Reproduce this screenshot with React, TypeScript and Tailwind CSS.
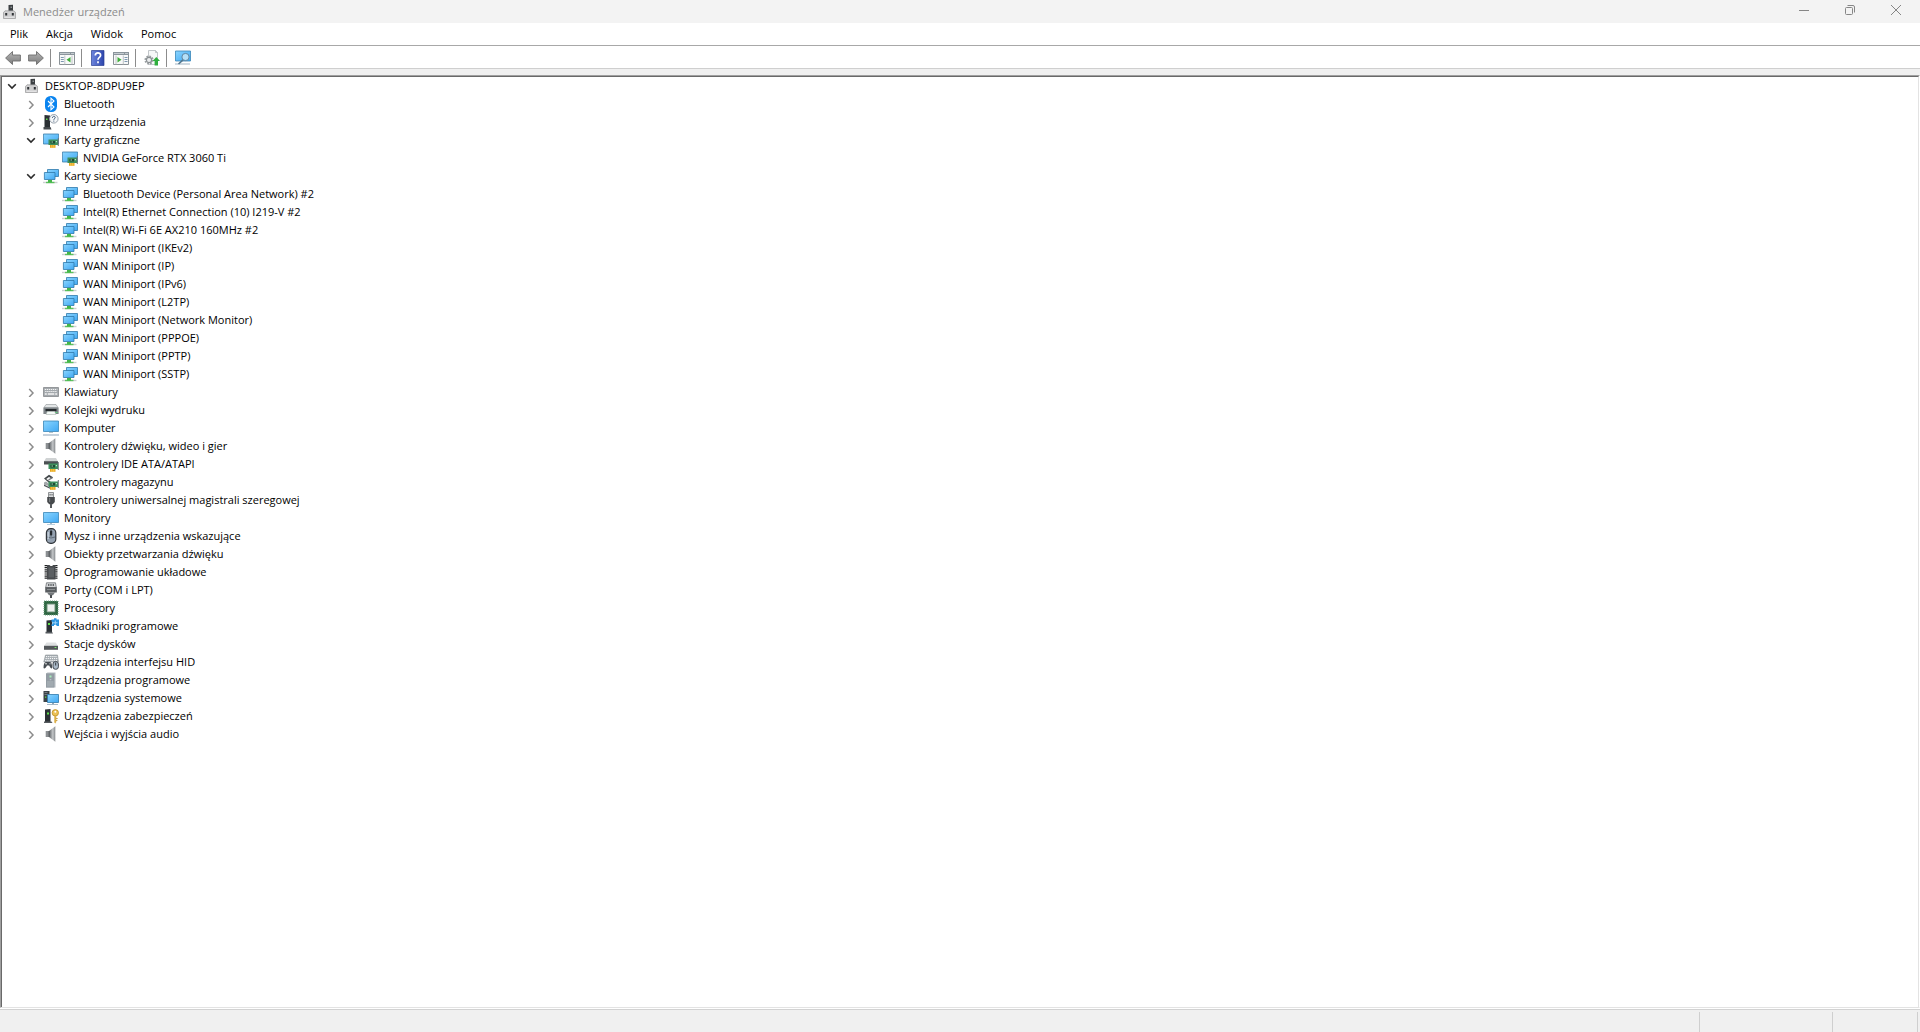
import { useState, type ReactNode } from 'react'

type IconProps = { children: ReactNode }

function Icon({ children }: IconProps) {
  return (
    <svg viewBox="0 0 16 16" className="h-4 w-4 shrink-0" aria-hidden="true">
      {children}
    </svg>
  )
}

const Gradients = () => (
  <svg className="absolute h-0 w-0" aria-hidden="true">
    <defs>
      <linearGradient id="screen" x1="0" y1="0" x2="1" y2="1">
        <stop offset="0" stopColor="#8ad5ff" />
        <stop offset="1" stopColor="#40a8f3" />
      </linearGradient>
      <linearGradient id="metal" x1="0" y1="0" x2="1" y2="0">
        <stop offset="0" stopColor="#5c6064" />
        <stop offset="0.6" stopColor="#c3c6c8" />
        <stop offset="1" stopColor="#85898c" />
      </linearGradient>
      <linearGradient id="arrow" x1="0" y1="0" x2="0" y2="1">
        <stop offset="0" stopColor="#b5b5b5" />
        <stop offset="1" stopColor="#7c7c7c" />
      </linearGradient>
      <linearGradient id="help" x1="0" y1="0" x2="1" y2="0">
        <stop offset="0" stopColor="#6c84dc" />
        <stop offset="1" stopColor="#2c44ac" />
      </linearGradient>
    </defs>
  </svg>
)

// Small green expansion card, shared by the adapter and controller icons
const Card = () => (
  <>
    <path d="M5.5 7.5h9.5V13H5.5z" fill="#3d8f5c" />
    <path d="M7.5 9h4.5v2.5H7.500z" fill="#1f4a33" />
    <path d="M8.500 9.500h1.500v1H8.500z" fill="#9fdcb2" />
    <path d="M12.800 9h1.200v1.200h-1.200z" fill="#b7e6c4" />
    <path d="M14.800 6h1v8h-1z" fill="#6f7679" />
    <path d="M7 13h5.500v2.800H7z" fill="#e8a61c" />
    <path d="M8.800 13v2.800M10.800 13v2.800" stroke="#fbe07a" strokeWidth="0.6" />
  </>
)

const Tower = () => (
  <>
    <path d="M2 1.5L7.5 1v13.5H2z" fill="#2b3034" />
    <path d="M1 13.5h7.5l1 1.5H1z" fill="#565b5f" />
    <path d="M4 4.5h2v2H4z" fill="#5fe04c" />
  </>
)

const computerNode = (
  <Icon>
    <path d="M6.500 1L11 .8v7H6.500z" fill="#3c4043" />
    <path d="M8.500 2.500H10V4H8.500z" fill="#8b8f92" />
    <path d="M1.500 8.500L3 6.800h9l1.500 1.700v6h-12z" fill="#cfcfd0" stroke="#8a8a8c" strokeWidth="0.6" />
    <path d="M3.200 9h2v2.500h-2zM9.800 9h2v2.500h-2z" fill="#303336" />
    <path d="M2.500 12.800h10v.8h-10z" fill="#efeff0" />
  </Icon>
)

const bluetooth = (
  <Icon>
    <rect x="2" y="0" width="12" height="16" rx="5.5" fill="#0a84ef" />
    <path d="M5 5l6 6-3 2.800V2.200L11 5l-6 6" fill="none" stroke="#fff" strokeWidth="1.1" />
  </Icon>
)

const unknownDevice = (
  <Icon>
    <path d="M1.5 1L7 1.5v12H1.5z" fill="#2b3034" />
    <path d="M.5 13h7l1 2.5h-8z" fill="#44494d" />
    <path d="M3 4.5h1.5V6H3z" fill="#5fe04c" />
    <circle cx="10.8" cy="4.8" r="4.3" fill="#f4f6f8" stroke="#8f9aa5" strokeWidth="0.9" />
    <path d="M9.400 3.800c0-2 3-1.800 2.800-.1-.1 1-1.400.9-1.400 2.100M10.800 6.600v1" fill="none" stroke="#3a5677" strokeWidth="1" />
  </Icon>
)

const display = (
  <Icon>
    <path d="M.4 2h15.200v10H.4z" fill="url(#screen)" stroke="#3b7ba8" strokeWidth="0.8" />
    <Card />
  </Icon>
)

const network = (
  <Icon>
    <path d="M4.500 1.500h11v7h-11z" fill="url(#screen)" stroke="#2f79ab" strokeWidth="0.8" />
    <path d="M1.400 4.500h10.600v7H1.400z" fill="url(#screen)" stroke="#2f79ab" strokeWidth="0.8" />
    <path d="M0 13.800h14.500v1.400H0z" fill="#cdd1d2" />
    <path d="M3 13.800h8.500v1.400H3z" fill="#5cc25f" />
    <path d="M5 12h4v2.500H5z" fill="#43b649" />
  </Icon>
)

const keyboard = (
  <Icon>
    <path d="M.5 3.500h15v9H.5z" fill="#a4a9ad" stroke="#85898c" strokeWidth="0.8" />
    <path d="M1.800 5.500h12.500M2.200 7.500h12" stroke="#f4f4f4" strokeDasharray="1.300 0.700" />
    <path d="M1.800 10h2M4.800 10h6.500M12.200 10h2" stroke="#f4f4f4" strokeWidth="1.300" />
  </Icon>
)

const printer = (
  <Icon>
    <path d="M3 2.500h10l2 3H1z" fill="#e3e6e7" stroke="#8f9497" strokeWidth="0.6" />
    <path d="M.4 5.500h15.200V12h-3l-1-2.500h-7.200l-1 2.500h-3z" fill="#7f8589" />
    <path d="M2.500 7h11v2.200h-11z" fill="#24292c" />
    <path d="M4.200 9.500h7.600l1 3H3.200z" fill="#f5fbf8" stroke="#9aa4a0" strokeWidth="0.5" />
    <path d="M12.500 10h2v1h-2z" fill="#62d47e" />
  </Icon>
)

const computer = (
  <Icon>
    <path d="M.5 1h15v10.500H.5z" fill="url(#screen)" stroke="#3b86b8" strokeWidth="0.8" />
    <path d="M6 12h4v1H6z" fill="#b8c4cc" />
    <path d="M0 14.500h16v1H0z" fill="#8aa3b8" />
  </Icon>
)

const speaker = (
  <Icon>
    <path d="M2.700 5h3.500v6H2.700z" fill="#8b8f92" />
    <path d="M6 5L12.300.3v15.400L6 11z" fill="url(#metal)" />
    <path d="M6 5v6" stroke="#54585b" strokeWidth="0.8" />
  </Icon>
)

const ideController = (
  <Icon>
    <path d="M3 2h10l2 3.500H1z" fill="#d0d3d4" />
    <path d="M1 5.200h14v3.300H1z" fill="#4b5053" />
    <Card />
  </Icon>
)

const storageController = (
  <Icon>
    <path d="M1 4.500L6 .8l4 2.500-1 1.500L6 3 3.200 5l4.800 3-1.200 1.600z" fill="#44494c" />
    <path d="M5.500 6L9 3.800" stroke="#777c80" strokeWidth="1.400" />
    <path d="M1 8.500l2-1 4 3v2L1 10.500z" fill="#a3a8ab" />
    <path d="M1 10.500l6 3v1.200L1 12z" fill="#50565a" />
    <Card />
  </Icon>
)

const usb = (
  <Icon>
    <path d="M5.500.5h5v5h-5z" fill="#dadcdd" stroke="#777b7e" strokeWidth="0.8" />
    <path d="M6.600 2h.9v1.500h-.9zM8.600 2h.9v1.500h-.9z" fill="#4d5154" />
    <path d="M4.200 5h7.600v5l-2 2.200H6.200l-2-2.200z" fill="#46494c" />
    <path d="M6 6h1.200v4H6z" fill="#767a7d" />
    <path d="M7 12h2v4H7z" fill="#55595c" />
  </Icon>
)

const monitor = (
  <Icon>
    <path d="M.5 2.500h15v10H.5z" fill="url(#screen)" stroke="#3b86b8" strokeWidth="0.8" />
    <path d="M7 13h2v1H7z" fill="#a9bccb" />
    <path d="M4 14h8v.8H4z" fill="#a9c3d6" />
  </Icon>
)

const mouse = (
  <Icon>
    <rect x="3.400" y=".6" width="9.400" height="14.800" rx="4.200" fill="#94a1b0" stroke="#30353a" strokeWidth="1.200" />
    <path d="M8 1.200v7.600M4 9q4 2 8 0" fill="none" stroke="#4b555f" strokeWidth="0.700" />
    <rect x="7" y="2.500" width="2.200" height="5" rx="1" fill="#252a2f" />
    <path d="M5.200 4v7" stroke="#d3dce5" strokeWidth="1" />
  </Icon>
)

const firmware = (
  <Icon>
    <path d="M2.800 1v14.500M13.300 1v14.500" stroke="#1e2022" strokeWidth="2.400" strokeDasharray="1.200 0.900" />
    <path d="M4 1h2.500l1 1h1.600l1-1h2.400v14.500H4z" fill="#474a4d" />
    <path d="M5.500 3.500h5.500v10H5.500z" fill="#5b5f62" />
  </Icon>
)

const port = (
  <Icon>
    <path d="M3.500.8h9l.8 4.700H2.700z" fill="#d4d6d8" stroke="#6c7073" strokeWidth="0.8" />
    <path d="M5 3h1.400M7.300 3h1.400M9.600 3H11" stroke="#3f4346" strokeWidth="1.400" />
    <path d="M2.200 5.200h11.600v5.300H2.200z" fill="#5a5e61" />
    <path d="M4 7h8v1H4z" fill="#8b8f92" />
    <path d="M4 10.500h8l-2 2.700H6z" fill="#74787b" />
    <path d="M7 13h2v3H7z" fill="#4a4e51" />
  </Icon>
)

const processor = (
  <Icon>
    <path d="M1 1h14v14H1z" fill="#2f6642" />
    <path d="M1 1h14v14H1z" fill="none" stroke="#6fa180" strokeDasharray="1 1" />
    <path d="M4.200 4.200h7.600v7.600H4.200z" fill="#eef2ef" stroke="#9fb5a6" strokeWidth="0.800" />
  </Icon>
)

const softwareComponent = (
  <Icon>
    <path d="M3.500 2.500L9 2v12.500H3.500z" fill="#2b3034" />
    <path d="M2.500 13.800H9l1 1.700H2.500z" fill="#565b5f" />
    <path d="M5 5h2v2H5z" fill="#5fe04c" />
    <path d="M8.500 1.500H11V.3h2.500v1.200H16V8h-2.500v-.9H11V8H8.500V6.200h1V3.700h-1z" fill="#2b93df" />
    <path d="M11.800 2.500h1v1.700h1.700v1h-1.700v1.700h-1V5.200h-1.700v-1h1.700z" fill="#9bd2f7" />
  </Icon>
)

const disk = (
  <Icon>
    <path d="M3.500 6.500h9.200L15 10H1z" fill="#dfe1e2" />
    <path d="M1 9.800h14v4H1z" fill="#54585b" />
    <path d="M11.600 11h1.800v1h-1.800z" fill="#7be86f" />
  </Icon>
)

const hid = (
  <Icon>
    <path d="M2.500 1h12l1 7H.8z" fill="#a6adb2" stroke="#8f9599" strokeWidth="0.6" />
    <path d="M3 2.600h11M2.600 4.600h12M2.200 6.600h12.500" stroke="#fff" strokeDasharray="1.200 0.900" />
    <path d="M.5 13.500C.6 9 2 7.500 4 8h2c1.800-.6 3 1 3.200 5.400-.2 1.800-1.600 1.400-3-1.900H4C2.600 14.800.6 15.200.5 13.500z" fill="#474d52" />
    <circle cx="3" cy="9.800" r=".8" fill="#f0f2f3" />
    <circle cx="7" cy="9.800" r=".7" fill="#aab2b8" />
    <rect x="10" y="7.500" width="5.400" height="7.800" rx="2.500" fill="#a9b8c6" stroke="#42484e" />
    <path d="M12.700 8.500v3" stroke="#30353a" />
  </Icon>
)

const softwareDevice = (
  <Icon>
    <path d="M3 1.500L4.500.5h8v15H3z" fill="#b3babf" />
    <path d="M3 1.500h8.200v14H3z" fill="#939ca3" />
    <path d="M4 9h6.500v5.500H4z" fill="#a1aab0" />
    <path d="M6.500 3.500h2v2h-2z" fill="#a6efba" />
    <path d="M6.800 7.200h1.500v1H6.800z" fill="#c8ced2" />
  </Icon>
)

const systemDevice = (
  <Icon>
    <path d="M.5 1h6v11h-6z" fill="#3b4146" />
    <path d="M1.500 2.500h3M1.500 4.500h3" stroke="#8d959b" strokeWidth="0.700" />
    <path d="M2 6.500h1.300v1.300H2z" fill="#5fe04c" />
    <path d="M4.500 4.500h11v8h-11z" fill="url(#screen)" stroke="#2f79ab" strokeWidth="0.800" />
    <path d="M9 13h2v1.200H9z" fill="#91a8b8" />
    <path d="M4 14h11v.8H4z" fill="#91a8b8" />
  </Icon>
)

const security = (
  <Icon>
    <Tower />
    <circle cx="12.300" cy="4.800" r="3.200" fill="#ecc257" stroke="#b98616" strokeWidth="0.700" />
    <circle cx="12.300" cy="3.800" r="1" fill="#fff" />
    <path d="M11.300 8h2v6l-1 1.500-1-1z" fill="#dcae45" />
    <path d="M13.300 10h1.200v1h-1.200zM13.300 12h1v1h-1z" fill="#b98616" />
  </Icon>
)

type Device = { name: string; icon: ReactNode; children?: Device[]; open?: boolean }

const categories: Device[] = [
  { name: 'Bluetooth', icon: bluetooth },
  { name: 'Inne urządzenia', icon: unknownDevice },
  {
    name: 'Karty graficzne',
    icon: display,
    open: true,
    children: [{ name: 'NVIDIA GeForce RTX 3060 Ti', icon: display }],
  },
  {
    name: 'Karty sieciowe',
    icon: network,
    open: true,
    children: [
      'Bluetooth Device (Personal Area Network) #2',
      'Intel(R) Ethernet Connection (10) I219-V #2',
      'Intel(R) Wi-Fi 6E AX210 160MHz #2',
      'WAN Miniport (IKEv2)',
      'WAN Miniport (IP)',
      'WAN Miniport (IPv6)',
      'WAN Miniport (L2TP)',
      'WAN Miniport (Network Monitor)',
      'WAN Miniport (PPPOE)',
      'WAN Miniport (PPTP)',
      'WAN Miniport (SSTP)',
    ].map((name) => ({ name, icon: network })),
  },
  { name: 'Klawiatury', icon: keyboard },
  { name: 'Kolejki wydruku', icon: printer },
  { name: 'Komputer', icon: computer },
  { name: 'Kontrolery dźwięku, wideo i gier', icon: speaker },
  { name: 'Kontrolery IDE ATA/ATAPI', icon: ideController },
  { name: 'Kontrolery magazynu', icon: storageController },
  { name: 'Kontrolery uniwersalnej magistrali szeregowej', icon: usb },
  { name: 'Monitory', icon: monitor },
  { name: 'Mysz i inne urządzenia wskazujące', icon: mouse },
  { name: 'Obiekty przetwarzania dźwięku', icon: speaker },
  { name: 'Oprogramowanie układowe', icon: firmware },
  { name: 'Porty (COM i LPT)', icon: port },
  { name: 'Procesory', icon: processor },
  { name: 'Składniki programowe', icon: softwareComponent },
  { name: 'Stacje dysków', icon: disk },
  { name: 'Urządzenia interfejsu HID', icon: hid },
  { name: 'Urządzenia programowe', icon: softwareDevice },
  { name: 'Urządzenia systemowe', icon: systemDevice },
  { name: 'Urządzenia zabezpieczeń', icon: security },
  { name: 'Wejścia i wyjścia audio', icon: speaker },
]

const root: Device = { name: 'DESKTOP-8DPU9EP', icon: computerNode, open: true, children: categories }

function TreeNode({ device, leaf = false }: { device: Device; leaf?: boolean }) {
  const [open, setOpen] = useState(device.open ?? false)

  return (
    <li role="treeitem" aria-expanded={leaf ? undefined : open}>
      <div className="flex h-[18px] items-center whitespace-nowrap">
        {leaf ? (
          <span className="w-[19px]" />
        ) : (
          <button
            type="button"
            aria-label={device.name}
            onClick={() => setOpen(!open)}
            className="flex h-[18px] w-[19px] items-center justify-center"
          >
            <svg viewBox="0 0 10 10" className="h-2.5 w-2.5" fill="none" aria-hidden="true">
              {open ? (
                <path d="M1.200 3.200L5 7l3.800-3.800" stroke="#2b2b2b" strokeWidth="1.600" />
              ) : (
                <path d="M3.200 2L7 6 3.200 10" stroke="#8c8c8c" strokeWidth="1.500" />
              )}
            </svg>
          </button>
        )}
        <span className="ml-[3px] mr-[5px]">{device.icon}</span>
        <span>{device.name}</span>
      </div>
      {open && device.children && (
        <ul role="group" className="pl-[19px]">
          {device.children.map((child) => (
            <TreeNode key={child.name} device={child} leaf={device !== root} />
          ))}
        </ul>
      )}
    </li>
  )
}

function TitleBar() {
  return (
    <header className="flex h-[23px] items-center bg-[#f3f3f3] pl-0.5">
      {computerNode}
      <h1 className="ml-[5px] flex-1 text-[#8c8c8c]">Menedżer urządzeń</h1>
      <div className="flex h-full pb-[3px] pr-px text-[#868686]">
        <button type="button" aria-label="Minimalizuj" className="flex w-[46px] items-center justify-center">
          <svg viewBox="0 0 10 10" className="h-2.5 w-2.5" stroke="currentColor">
            <path d="M0 5.500h10" />
          </svg>
        </button>
        <button type="button" aria-label="Przywróć" className="flex w-[46px] items-center justify-center">
          <svg viewBox="0 0 10 10" className="h-2.5 w-2.5" fill="none" stroke="currentColor">
            <rect x=".5" y="2.500" width="7" height="7" rx="1" />
            <path d="M2.500.5H8A1.500 1.500 0 0 1 9.500 2v5.500" />
          </svg>
        </button>
        <button type="button" aria-label="Zamknij" className="flex w-[46px] items-center justify-center">
          <svg viewBox="0 0 10 10" className="h-2.5 w-2.5" stroke="currentColor">
            <path d="M0 0l10 10M10 0L0 10" />
          </svg>
        </button>
      </div>
    </header>
  )
}

function MenuBar() {
  return (
    <nav className="flex h-[23px] items-center border-b border-[#a8a8a8] pl-px">
      {['Plik', 'Akcja', 'Widok', 'Pomoc'].map((item) => (
        <button key={item} type="button" className="px-[9px]">
          {item}
        </button>
      ))}
    </nav>
  )
}

const Separator = () => <span className="ml-1.5 mr-2 h-[18px] w-px bg-[#8c8c8c]" />

function ToolBar() {
  return (
    <div role="toolbar" className="flex h-[23px] items-center border-b border-[#cfcfcf] pl-[5px] pt-0.5">
      <button type="button" aria-label="Wstecz">
        <Icon>
          <path d="M.6 8L7.500 1.500V5h7.900v6H7.500v3.500z" fill="url(#arrow)" stroke="#6d6d6d" strokeWidth="0.900" />
        </Icon>
      </button>
      <button type="button" aria-label="Dalej" className="ml-[7px]">
        <Icon>
          <path d="M15.400 8L8.500 1.500V5H.6v6h7.900v3.500z" fill="url(#arrow)" stroke="#6d6d6d" strokeWidth="0.900" />
        </Icon>
      </button>
      <Separator />
      <button type="button" aria-label="Pokaż drzewo konsoli">
        <Icon>
          <path d="M.5 2.500h15v12H.5z" fill="#f8f9f9" stroke="#8b9296" />
          <path d="M0 2h16v3H0z" fill="#8b959c" />
          <path d="M1 3.500h10M12 3.500h3" stroke="#d4dadd" strokeWidth="0.800" />
          <path d="M1.800 7.500h3M1.800 9.500h3M1.800 11.500h3" stroke="#6f8ca8" strokeWidth="0.900" />
          <path d="M5.800 5.500v9M13 5.500v9" stroke="#b1b7ba" strokeWidth="0.800" />
          <path d="M11.500 7v5.500L7.500 9.800z" fill="#3fae3a" />
        </Icon>
      </button>
      <Separator />
      <button type="button" aria-label="Pomoc">
        <Icon>
          <path d="M1.500.5h12.500v15H1.500z" fill="url(#help)" stroke="#2b3f94" strokeWidth="0.700" />
          <path d="M5.300 5.500c0-3.600 5.400-3.400 5.300-.2 0 2.200-2.600 2-2.600 4.400M8 11.300v1.900" fill="none" stroke="#fff" strokeWidth="1.700" />
        </Icon>
      </button>
      <button type="button" aria-label="Pokaż okienko akcji" className="ml-[7px]">
        <Icon>
          <path d="M.5 2.500h15v12H.5z" fill="#f8f9f9" stroke="#8b9296" />
          <path d="M0 2h16v3H0z" fill="#8b959c" />
          <path d="M1 3.500h10M12 3.500h3" stroke="#d4dadd" strokeWidth="0.800" />
          <path d="M11.500 7.500h3M11.500 9.500h3M11.500 11.500h3" stroke="#6f8ca8" strokeWidth="0.900" />
          <path d="M3 5.500v9M10.300 5.500v9" stroke="#b1b7ba" strokeWidth="0.800" />
          <path d="M4.500 7v5.500l4-2.700z" fill="#3fae3a" />
        </Icon>
      </button>
      <Separator />
      <button type="button" aria-label="Aktualizuj sterownik">
        <Icon>
          <path d="M4.500.5h7l2 2v12h-9z" fill="#f7f8f8" stroke="#b4b9bc" strokeWidth="0.800" />
          <path d="M11.500.5v2h2" fill="none" stroke="#b4b9bc" strokeWidth="0.800" />
          <circle cx="5" cy="10" r="3.600" fill="none" stroke="#9a9fa2" strokeWidth="2" strokeDasharray="1.700 1.100" />
          <circle cx="5" cy="10" r="2.600" fill="#eceeef" stroke="#8b9093" strokeWidth="1.200" />
          <path d="M12.300 7l3.700 4h-2v4.500h-3.400V11H8.600z" fill="#2fae3d" />
        </Icon>
      </button>
      <Separator />
      <button type="button" aria-label="Skanuj w poszukiwaniu zmian sprzętu">
        <Icon>
          <path d="M.5 1h15v10H.5z" fill="url(#screen)" stroke="#3b86b8" strokeWidth="0.800" />
          <path d="M0 13.500h15v1H0z" fill="#9eb3c2" />
          <circle cx="10.500" cy="7" r="3.600" fill="#b5e0f8" stroke="#5f7f96" strokeWidth="0.900" />
          <path d="M8 9.800L3.500 14" stroke="#54788f" strokeWidth="1.600" />
        </Icon>
      </button>
    </div>
  )
}

export default function App() {
  return (
    <div className="flex h-screen flex-col bg-white font-['Open_Sans','Noto_Sans',sans-serif] text-[11px] leading-4 text-black">
      <Gradients />
      <TitleBar />
      <MenuBar />
      <ToolBar />
      <main className="flex min-h-0 flex-1 flex-col border-b border-white bg-[#f0f0f0] pt-1.5">
        <div className="min-h-0 flex-1 border-b border-l border-r border-t border-b-[#e3e3e3] border-l-[#a0a0a0] border-r-white border-t-[#a0a0a0]">
          <div className="h-full overflow-auto border-l border-r border-t border-l-[#696969] border-r-[#e3e3e3] border-t-[#696969] bg-white">
            <ul role="tree" aria-label="Urządzenia">
              <TreeNode device={root} />
            </ul>
          </div>
        </div>
      </main>
      <footer className="flex h-[23px] justify-end border-t border-[#d2d2d2] bg-[#f0f0f0] pr-0.5 pt-0.5">
        <span className="w-[133px] border-l border-[#cfcfcf]" />
        <span className="w-[86px] border-l border-r border-[#cfcfcf]" />
      </footer>
    </div>
  )
}
